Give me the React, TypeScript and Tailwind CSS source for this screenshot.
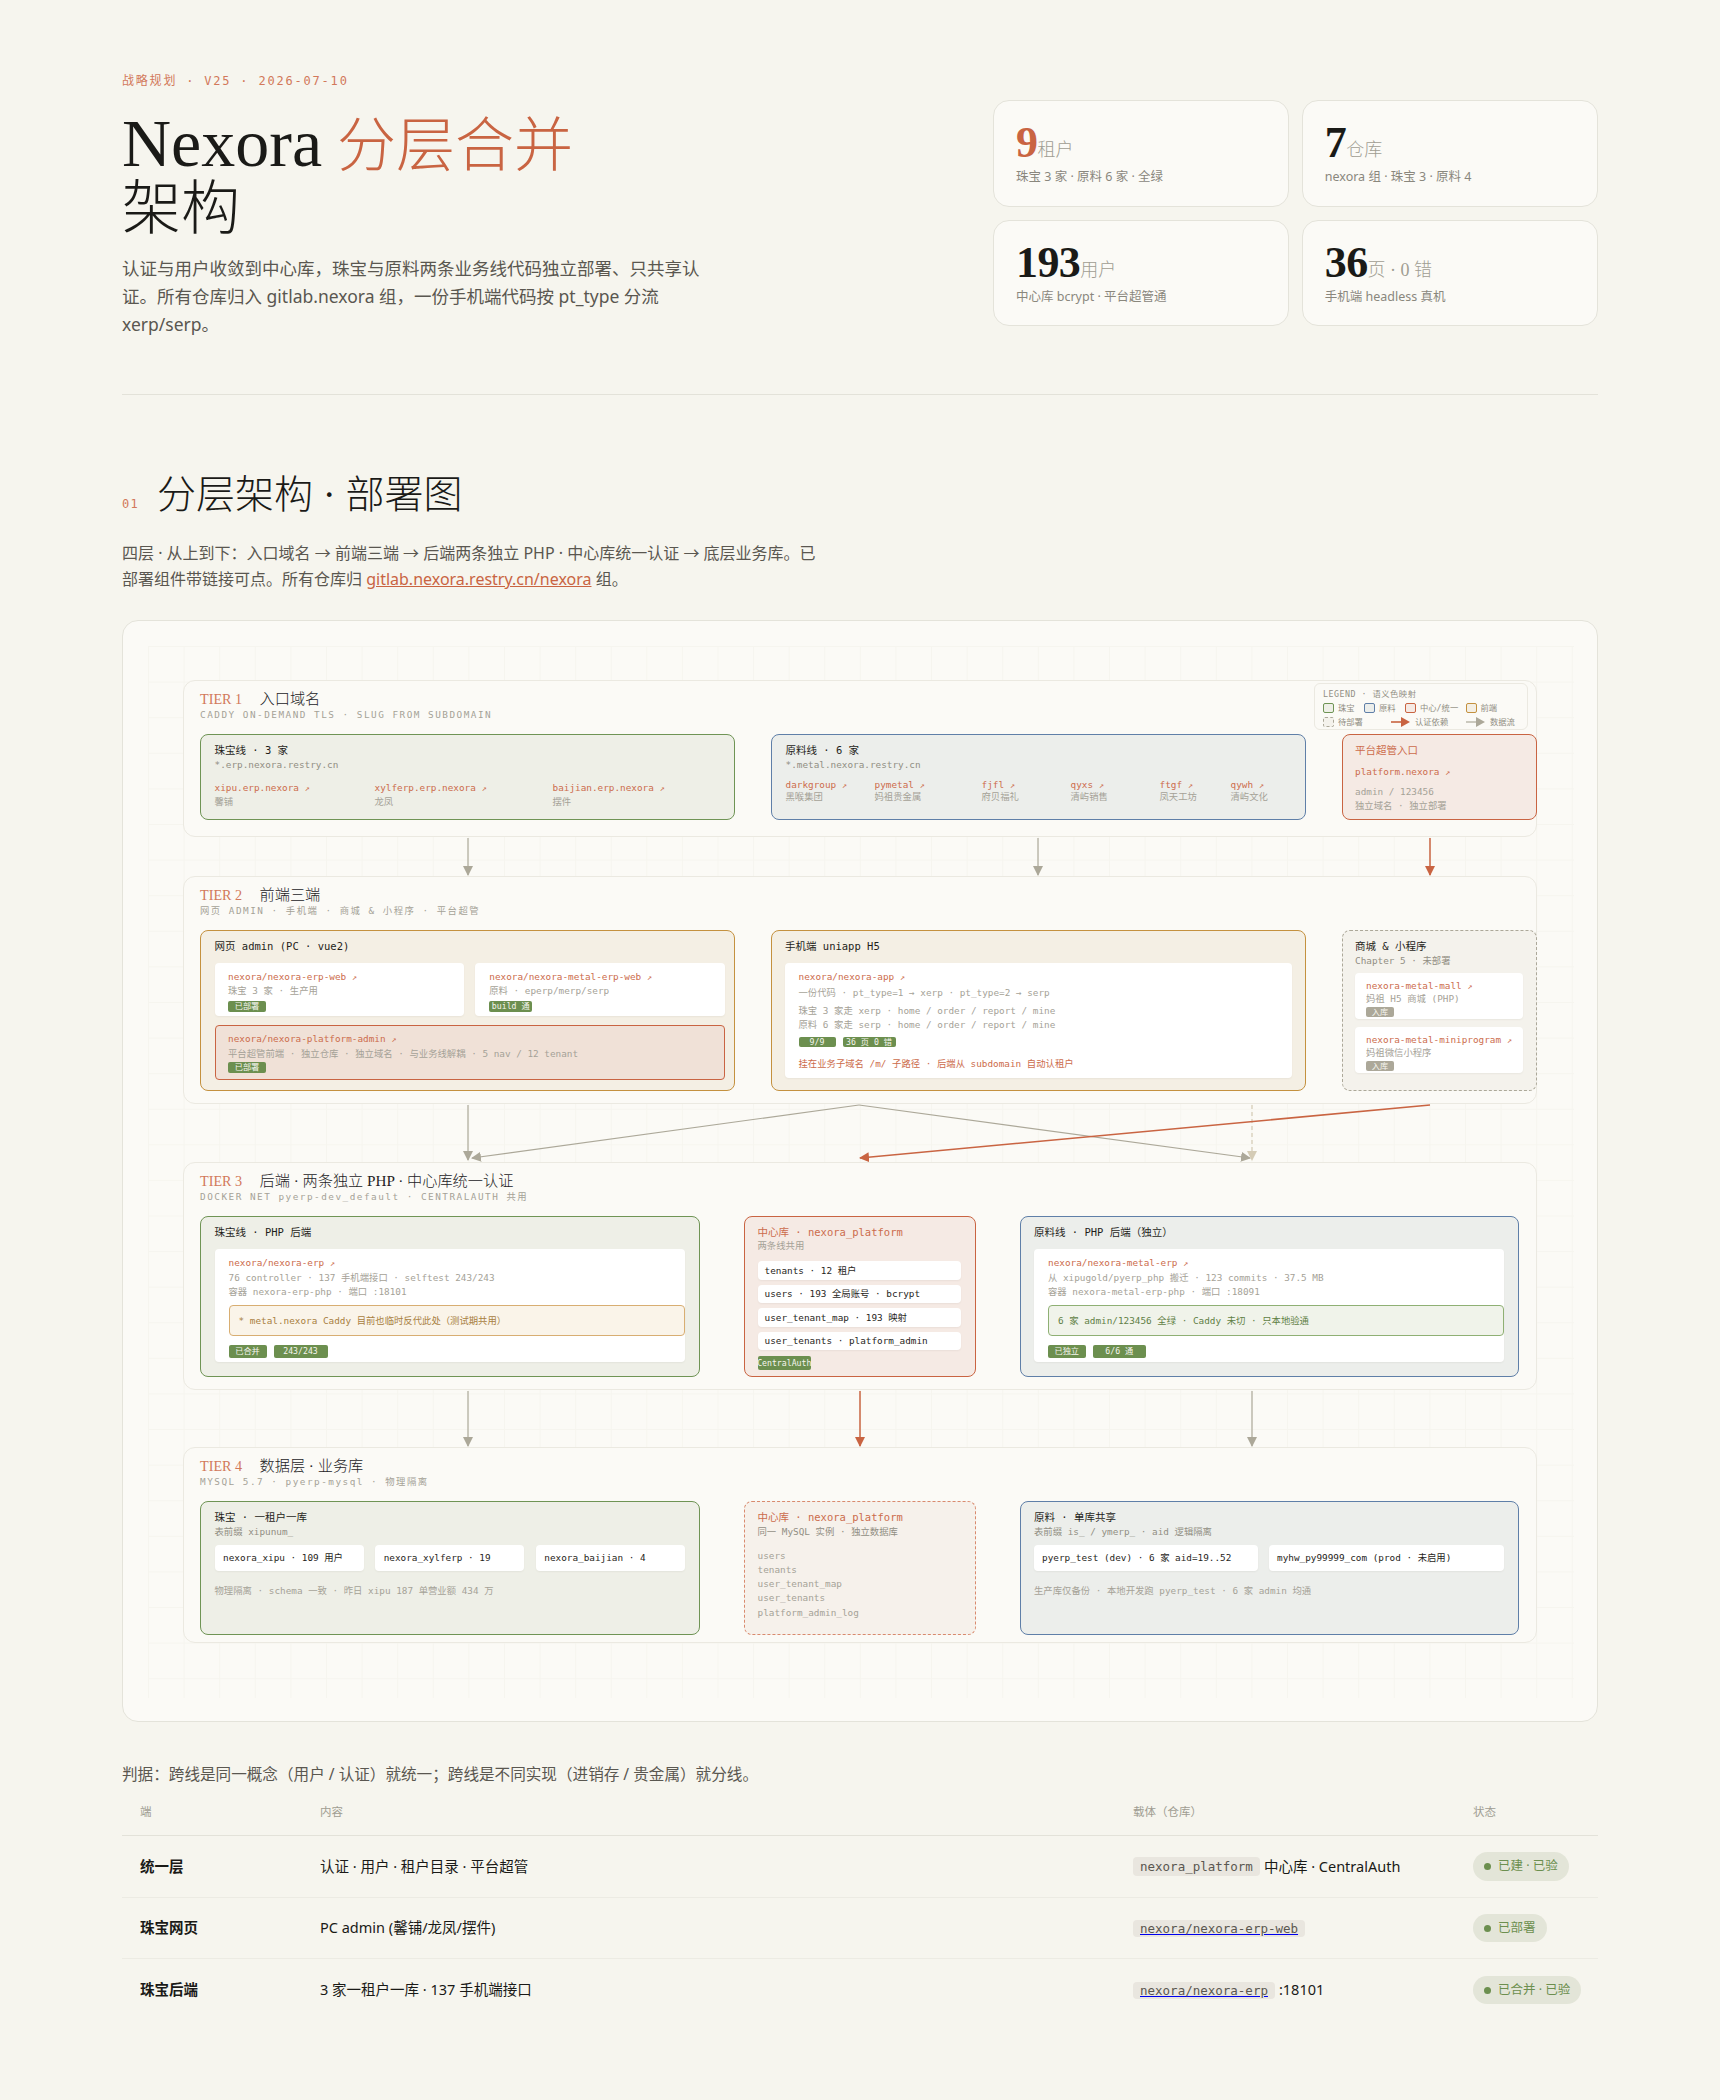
import React from 'react'

const MONO = "font-['DejaVu_Sans_Mono','Noto_Sans_CJK_SC',monospace]"
const SERIF = "font-['Liberation_Serif','Noto_Sans_CJK_SC',serif]"
const LINE = 'h-[14px] leading-[14px] whitespace-pre'
const BOX = 'rounded-[8px] border-[1.5px] pt-[8px]'
const GREEN = 'border-[#6f9455] bg-[#eeefe7]'
const BLUE = 'border-[#5f7fa8] bg-[#eceeeb]'
const AMBER = 'border-[#c4913f] bg-[#f4efe4]'
const RED = 'border-[#c96442] bg-[#f5eae4]'
const CARD = 'rounded-[4px] bg-white shadow-[0_1px_2px_rgba(60,50,30,0.06)]'

function Tier({ n, title, sub, className, children }: { n: number; title: string; sub: string; className?: string; children: React.ReactNode }) {
  return (
    <div className={`relative rounded-[12px] border border-[#ebe9e1] bg-[#fbfaf6] pl-[16px] pt-[9px] ${className || ''}`}>
      <div className="flex h-[18px] items-center leading-[18px]">
        <span className={`${SERIF} w-[59.5px] text-[14.2px] text-[#d2785a]`}>TIER {n}</span>
        <span className={`${SERIF} text-[15.2px] font-light text-[#24231f]`}>{title}</span>
      </div>
      <div className={`${MONO} ${LINE} text-[9.35px] tracking-[1.5px] text-[#a5a297]`}>{sub}</div>
      {children}
    </div>
  )
}

function Title({ children, coral }: { children: React.ReactNode; coral?: boolean }) {
  return <div className={`${LINE} text-[10.5px] ${coral ? 'text-[#cc6c4c]' : 'text-[#1f1e1a]'}`}>{children}</div>
}

function Sub({ children, className }: { children: React.ReactNode; className?: string }) {
  return <div className={`${LINE} text-[9.35px] text-[#918e83] ${className || ''}`}>{children}</div>
}

function Link({ children, className }: { children: React.ReactNode; className?: string }) {
  return (
    <div className={`${LINE} text-[9.35px] text-[#cc6c4c] ${className || ''}`}>
      {children} <span className="text-[8.5px]">↗</span>
    </div>
  )
}

function Badge({ children, w, h, gray, className }: { children: React.ReactNode; w: string; h: string; gray?: boolean; className?: string }) {
  return (
    <div className={`flex items-center justify-center overflow-hidden rounded-[2px] text-[8.2px] leading-none text-[#f6f5ee] ${gray ? 'bg-[#aca899]' : 'bg-[#6c8f4f]'} ${w} ${h} ${className || ''}`}>
      {children}
    </div>
  )
}

function Legend() {
  return (
    <div className={`${MONO} absolute right-[8px] top-[2px] h-[47px] w-[214px] rounded-[6px] border border-[#ebe9e1] bg-[#fbfaf6] pl-[8px] pt-[4px] text-[8.3px] leading-[12px] text-[#918e83]`}>
      <div className="h-[12px] whitespace-pre tracking-[0.5px]">LEGEND · 语义色映射</div>
      <div className="mt-[2px] flex h-[12px] items-center whitespace-pre">
        <span className="h-[10px] w-[11px] rounded-[2px] border border-[#6f9455] bg-[#eeefe7]" />
        <span className="ml-[4px] w-[26px]">珠宝</span>
        <span className="h-[10px] w-[11px] rounded-[2px] border border-[#5f7fa8] bg-[#eceeeb]" />
        <span className="ml-[4px] w-[26px]">原料</span>
        <span className="h-[10px] w-[11px] rounded-[2px] border border-[#c96442] bg-[#f5eae4]" />
        <span className="ml-[4px] w-[45.5px]">中心/统一</span>
        <span className="h-[10px] w-[11px] rounded-[2px] border border-[#c4913f] bg-[#f4efe4]" />
        <span className="ml-[4px]">前端</span>
      </div>
      <div className="mt-[2px] flex h-[12px] items-center whitespace-pre">
        <span className="h-[10px] w-[11px] rounded-[2px] border border-dashed border-[#aca899] bg-[#f4f2ec]" />
        <span className="ml-[4px] w-[53px]">待部署</span>
        <svg width="19" height="10" viewBox="0 0 19 10"><path d="M0 5h11" stroke="#c96442" strokeWidth="1.6" /><path d="M10 0l9 5-9 5z" fill="#c96442" /></svg>
        <span className="ml-[5px] w-[51px]">认证依赖</span>
        <svg width="19" height="10" viewBox="0 0 19 10"><path d="M0 5h11" stroke="#aca899" strokeWidth="1.2" /><path d="M10 0l9 5-9 5z" fill="#aca899" /></svg>
        <span className="ml-[5px]">数据流</span>
      </div>
    </div>
  )
}

function Arrows() {
  return (
    <svg className="absolute left-[-1px] top-[-1px]" width="1476" height="1101" viewBox="122 620 1476 1101" fill="none">
      <defs>
        <marker id="g" markerWidth="10" markerHeight="10" refX="9" refY="5" orient="auto" markerUnits="userSpaceOnUse">
          <path d="M0 0L10 5L0 10z" fill="#aca899" />
        </marker>
        <marker id="r" markerWidth="10" markerHeight="10" refX="9" refY="5" orient="auto" markerUnits="userSpaceOnUse">
          <path d="M0 0L10 5L0 10z" fill="#c96442" />
        </marker>
        <marker id="d" markerWidth="10" markerHeight="10" refX="9" refY="5" orient="auto" markerUnits="userSpaceOnUse">
          <path d="M0 0L10 5L0 10z" fill="#d4cbb5" />
        </marker>
      </defs>
      <g stroke="#aca899" strokeWidth="1.2">
        <path d="M468 838V875" markerEnd="url(#g)" />
        <path d="M1038 838V875" markerEnd="url(#g)" />
        <path d="M468 1105V1160" markerEnd="url(#g)" />
        <path d="M859 1105L472 1158" markerEnd="url(#g)" />
        <path d="M859 1105L1250 1158" markerEnd="url(#g)" />
        <path d="M468 1391V1446" markerEnd="url(#g)" />
        <path d="M1252 1391V1446" markerEnd="url(#g)" />
      </g>
      <path d="M1252 1105V1160" stroke="#d4cbb5" strokeWidth="1.2" strokeDasharray="4 3" markerEnd="url(#d)" />
      <g stroke="#c96442" strokeWidth="1.5">
        <path d="M1430 838V875" markerEnd="url(#r)" />
        <path d="M1430 1105L860 1158" markerEnd="url(#r)" />
        <path d="M860 1391V1446" markerEnd="url(#r)" />
      </g>
    </svg>
  )
}

function Diagram() {
  return (
    <div className="relative mt-[28px] h-[1102px] rounded-[16px] border border-[#e4e3da] bg-[#fbfaf6] px-[60px] pt-[59px]">
      <div className="absolute left-[25px] top-[25px] h-[1052px] w-[1426px] bg-[linear-gradient(#f6f5ef_1px,transparent_1px),linear-gradient(90deg,#f6f5ef_1px,transparent_1px)] bg-[size:35.6px_35.6px]" />
      <Arrows />
      <div className={`${MONO} relative`}>
        <Tier n={1} title="入口域名" sub="CADDY ON-DEMAND TLS · SLUG FROM SUBDOMAIN" className="h-[157px]">
          <Legend />
          <div className="mt-[12px] grid grid-cols-[535px_535px_195px] gap-[36px]">
            <div className={`${BOX} ${GREEN} h-[86px] pl-[13.5px]`}>
              <Title>珠宝线 · 3 家</Title>
              <Sub className="mt-[1px]">*.erp.nexora.restry.cn</Sub>
              <div className="mt-[9px] grid grid-cols-[160px_178px_1fr]">
                <div><Link>xipu.erp.nexora</Link><Sub className="text-[#a5a297]">馨铺</Sub></div>
                <div><Link>xylferp.erp.nexora</Link><Sub className="text-[#a5a297]">龙凤</Sub></div>
                <div><Link>baijian.erp.nexora</Link><Sub className="text-[#a5a297]">摆件</Sub></div>
              </div>
            </div>
            <div className={`${BOX} ${BLUE} h-[86px] pl-[13.5px]`}>
              <Title>原料线 · 6 家</Title>
              <Sub className="mt-[1px]">*.metal.nexora.restry.cn</Sub>
              <div className="mt-[6px] grid grid-cols-[89px_107px_89px_89px_71px_1fr]">
                {[['darkgroup', '黑喉集团'], ['pymetal', '妈祖贵金属'], ['fjfl', '府贝福礼'], ['qyxs', '清屿销售'], ['ftgf', '凤天工坊'], ['qywh', '清屿文化']].map(([a, b]) => (
                  <div key={a}><Link className="!h-[13px] !leading-[13px]">{a}</Link><Sub className="!h-[12px] !leading-[12px] text-[#a5a297]">{b}</Sub></div>
                ))}
              </div>
            </div>
            <div className={`${BOX} ${RED} h-[86px] pl-[12px]`}>
              <Title coral>平台超管入口</Title>
              <Link className="mt-[8px]">platform.nexora</Link>
              <Sub className="mt-[6px] text-[#a5a297]">admin / 123456</Sub>
              <Sub className="text-[#a5a297]">独立域名 · 独立部署</Sub>
            </div>
          </div>
        </Tier>

        <Tier n={2} title="前端三端" sub="网页 ADMIN · 手机端 · 商城 & 小程序 · 平台超管" className="mt-[39px] h-[228px]">
          <div className="mt-[12px] grid grid-cols-[535px_535px_195px] gap-[36px]">
            <div className={`${BOX} ${AMBER} h-[161px] pl-[13.5px] pr-[9.5px]`}>
              <Title>网页 admin (PC · vue2)</Title>
              <div className="mt-[10px] grid grid-cols-2 gap-[11.5px]">
                <div className={`${CARD} h-[52.5px] pl-[13.5px] pt-[7px]`}>
                  <Link>nexora/nexora-erp-web</Link>
                  <Sub className="text-[#a5a297]">珠宝 3 家 · 生产用</Sub>
                  <Badge w="w-[38px]" h="h-[11px]" className="mt-[2.5px]">已部署</Badge>
                </div>
                <div className={`${CARD} h-[52.5px] pl-[14px] pt-[7px]`}>
                  <Link>nexora/nexora-metal-erp-web</Link>
                  <Sub className="text-[#a5a297]">原料 · eperp/merp/serp</Sub>
                  <Badge w="w-[43px]" h="h-[11px]" className="mt-[2.5px]">build 通</Badge>
                </div>
              </div>
              <div className="mt-[9px] h-[55px] rounded-[4px] border-[1.5px] border-[#c96442] bg-[#f0e1d7] pl-[12.5px] pt-[6px]">
                <Link>nexora/nexora-platform-admin</Link>
                <Sub className="mt-[1px] text-[#a5a297]">平台超管前端 · 独立仓库 · 独立域名 · 与业务线解耦 · 5 nav / 12 tenant</Sub>
                <Badge w="w-[38px]" h="h-[11px]" className="mt-[1px]">已部署</Badge>
              </div>
            </div>
            <div className={`${BOX} ${AMBER} h-[161px] pl-[13px] pr-[13.5px]`}>
              <Title>手机端 uniapp H5</Title>
              <div className={`${CARD} mt-[10px] h-[115px] pl-[13.5px] pt-[7px]`}>
                <Link>nexora/nexora-app</Link>
                <Sub className="mt-[2px] text-[#a5a297]">一份代码 · pt_type=1 → xerp · pt_type=2 → serp</Sub>
                <Sub className="mt-[4px] text-[#a5a297]">珠宝 3 家走 xerp · home / order / report / mine</Sub>
                <Sub className="text-[#a5a297]">原料 6 家走 serp · home / order / report / mine</Sub>
                <div className="mt-[5px] flex gap-[7px]">
                  <Badge w="w-[37px]" h="h-[10px]">9/9</Badge>
                  <Badge w="w-[53px]" h="h-[10px]">36 页 0 错</Badge>
                </div>
                <Sub className="mt-[10px] !text-[#cc6c4c]">挂在业务子域名 /m/ 子路径 · 后端从 subdomain 自动认租户</Sub>
              </div>
            </div>
            <div className="h-[161px] rounded-[8px] border-[1.5px] border-dashed border-[#aca899] bg-[#f4f2ec] pl-[12px] pr-[13px] pt-[8px]">
              <Title>商城 &amp; 小程序</Title>
              <Sub className="mt-[1px] text-[#6f6c62]">Chapter 5 · 未部署</Sub>
              <div className={`${CARD} mt-[5px] h-[46px] pl-[11px] pt-[6px]`}>
                <Link>nexora-metal-mall</Link>
                <Sub className="!h-[12px] !leading-[12px] text-[#a5a297]">妈祖 H5 商城 (PHP)</Sub>
                <Badge gray w="w-[28px]" h="h-[10px]" className="mt-[2px]">入库</Badge>
              </div>
              <div className={`${CARD} mt-[8px] h-[46px] pl-[11px] pt-[6px]`}>
                <Link>nexora-metal-miniprogram</Link>
                <Sub className="!h-[12px] !leading-[12px] text-[#a5a297]">妈祖微信小程序</Sub>
                <Badge gray w="w-[28px]" h="h-[10px]" className="mt-[2px]">入库</Badge>
              </div>
            </div>
          </div>
        </Tier>

        <Tier n={3} title="后端 · 两条独立 PHP · 中心库统一认证" sub="DOCKER NET pyerp-dev_default · CENTRALAUTH 共用" className="mt-[58px] h-[228px]">
          <div className="mt-[12px] grid grid-cols-[499.5px_232px_499px] gap-[44px]">
            <div className={`${BOX} ${GREEN} h-[161px] pl-[13.5px] pr-[13.5px]`}>
              <Title>珠宝线 · PHP 后端</Title>
              <div className={`${CARD} mt-[10px] h-[113px] pl-[14px] pt-[7px]`}>
                <Link>nexora/nexora-erp</Link>
                <Sub className="mt-[1px] text-[#a5a297]">76 controller · 137 手机端接口 · selftest 243/243</Sub>
                <Sub className="text-[#a5a297]">容器 nexora-erp-php · 端口 :18101</Sub>
                <div className="mt-[6px] flex h-[31px] items-center rounded-[4px] border border-[#d8ae72] bg-[#faf4e9] pl-[9px] text-[9.35px] text-[#a8803f] whitespace-pre">* metal.nexora Caddy 目前也临时反代此处（测试期共用）</div>
                <div className="mt-[8.5px] flex gap-[7px]">
                  <Badge w="w-[38px]" h="h-[13px]">已合并</Badge>
                  <Badge w="w-[54px]" h="h-[13px]">243/243</Badge>
                </div>
              </div>
            </div>
            <div className={`${BOX} ${RED} h-[161px] pl-[13px] pr-[13.5px]`}>
              <Title coral>中心库 · nexora_platform</Title>
              <Sub className="text-[#a5a297]">两条线共用</Sub>
              <div className="mt-[8px] flex flex-col gap-[5px]">
                {['tenants · 12 租户', 'users · 193 全局账号 · bcrypt', 'user_tenant_map · 193 映射', 'user_tenants · platform_admin'].map(t => (
                  <div key={t} className={`${CARD} flex h-[18.5px] items-center pl-[7px] text-[9.35px] text-[#1f1e1a] whitespace-pre`}>{t}</div>
                ))}
              </div>
              <Badge w="w-[53.5px]" h="h-[14px]" className="mt-[5.5px]">CentralAuth</Badge>
            </div>
            <div className={`${BOX} ${BLUE} h-[161px] pl-[13.5px] pr-[13.5px]`}>
              <Title>原料线 · PHP 后端（独立）</Title>
              <div className={`${CARD} mt-[10px] h-[113px] pl-[14px] pt-[7px]`}>
                <Link>nexora/nexora-metal-erp</Link>
                <Sub className="mt-[1px] text-[#a5a297]">从 xipugold/pyerp_php 搬迁 · 123 commits · 37.5 MB</Sub>
                <Sub className="text-[#a5a297]">容器 nexora-metal-erp-php · 端口 :18091</Sub>
                <div className="mt-[6px] flex h-[31px] items-center rounded-[4px] border border-[#8fb074] bg-[#f0f3ea] pl-[9px] text-[9.35px] text-[#5f7f45] whitespace-pre">6 家 admin/123456 全绿 · Caddy 未切 · 只本地验通</div>
                <div className="mt-[8.5px] flex gap-[7px]">
                  <Badge w="w-[37.5px]" h="h-[13px]">已独立</Badge>
                  <Badge w="w-[53.5px]" h="h-[13px]">6/6 通</Badge>
                </div>
              </div>
            </div>
          </div>
        </Tier>

        <Tier n={4} title="数据层 · 业务库" sub="MYSQL 5.7 · pyerp-mysql · 物理隔离" className="mt-[57px] h-[196px]">
          <div className="mt-[12px] grid grid-cols-[499.5px_232px_499px] gap-[44px]">
            <div className={`${BOX} ${GREEN} h-[134px] pl-[13.5px] pr-[13.5px]`}>
              <Title>珠宝 · 一租户一库</Title>
              <Sub className="mt-[1px] text-[#6f6c62]">表前缀 xipunum_</Sub>
              <div className="mt-[6px] grid grid-cols-3 gap-[11.5px]">
                {['nexora_xipu · 109 用户', 'nexora_xylferp · 19', 'nexora_baijian · 4'].map(t => (
                  <div key={t} className={`${CARD} flex h-[26px] items-center pl-[8.5px] text-[9.35px] text-[#1f1e1a] whitespace-pre`}>{t}</div>
                ))}
              </div>
              <Sub className="mt-[13px] text-[#a5a297]">物理隔离 · schema 一致 · 昨日 xipu 187 单营业额 434 万</Sub>
            </div>
            <div className={`${BOX} h-[134px] border-dashed border-[#d98a6e] bg-[#f6f1eb] pl-[13px]`}>
              <Title coral>中心库 · nexora_platform</Title>
              <Sub className="mt-[1px] text-[#918e83]">同一 MySQL 实例 · 独立数据库</Sub>
              <Sub className="mt-[10px] text-[#a5a297]">users</Sub>
              <Sub className="text-[#a5a297]">tenants</Sub>
              <Sub className="text-[#a5a297]">user_tenant_map</Sub>
              <Sub className="text-[#a5a297]">user_tenants</Sub>
              <Sub className="mt-[1px] text-[#a5a297]">platform_admin_log</Sub>
            </div>
            <div className={`${BOX} ${BLUE} h-[134px] pl-[13.5px] pr-[13.5px]`}>
              <Title>原料 · 单库共享</Title>
              <Sub className="mt-[1px] text-[#6f6c62]">表前缀 is_ / ymerp_ · aid 逻辑隔离</Sub>
              <div className="mt-[6px] grid grid-cols-[224px_1fr] gap-[11px]">
                {['pyerp_test (dev) · 6 家 aid=19..52', 'myhw_py99999_com (prod · 未启用)'].map(t => (
                  <div key={t} className={`${CARD} flex h-[26px] items-center pl-[8px] text-[9.35px] text-[#1f1e1a] whitespace-pre`}>{t}</div>
                ))}
              </div>
              <Sub className="mt-[13px] text-[#a5a297]">生产库仅备份 · 本地开发跑 pyerp_test · 6 家 admin 均通</Sub>
            </div>
          </div>
        </Tier>
      </div>
    </div>
  )
}

function Stat({ n, unit, sub, coral }: { n: string; unit: string; sub: string; coral?: boolean }) {
  return (
    <div className="h-[106.5px] rounded-[16px] border border-[#e4e3da] bg-[#fbfaf6] pl-[22px] pt-[20px]">
      <div className="flex h-[44px] items-end leading-[44px]">
        <span className={`${SERIF} text-[44px] font-bold tracking-[-0.6px] ${coral ? 'text-[#c96442]' : 'text-[#1a1a17]'}`}>{n}</span>
        <span className={`${SERIF} text-[18px] font-light leading-[29px] text-[#a09d92]`}>{unit}</span>
      </div>
      <div className="mt-[3px] text-[12.5px] leading-[18px] text-[#8a877d]">{sub}</div>
    </div>
  )
}

const Dot = () => <span className="mr-[7px] h-[7px] w-[7px] rounded-full bg-[#6c8f4f]" />

function Row({ name, desc, repo, after, href, status, last }: { name: string; desc: string; repo: string; after: string; href?: boolean; status: string; last?: boolean }) {
  const code = <code className={`${MONO} rounded-[4px] bg-[#e9e6df] px-[7px] py-[1px] text-[12.5px] leading-[17px] text-[#5a5750]`}>{repo}</code>
  return (
    <div className={`grid h-[61.5px] grid-cols-[198px_813px_340px_1fr] items-center text-[14.5px] text-[#1a1a17] ${last ? '' : 'border-b border-[#ecebe3]'}`}>
      <div className="pl-[18px] font-semibold">{name}</div>
      <div>{desc}</div>
      <div className="flex items-center">
        {href ? <a href="#" className="text-[#0000ee] underline">{code}</a> : code}
        <span className="ml-[4px]">{after}</span>
      </div>
      <div>
        <span className="inline-flex h-[28.5px] items-center rounded-full bg-[#e3e5d8] px-[11px] text-[12.5px] text-[#6c8f4f]"><Dot />{status}</span>
      </div>
    </div>
  )
}

export default function App() {
  return (
    <div className="min-h-[2100px] bg-[#f6f5ee] px-[122px] pt-[73px] font-['Noto_Sans','Noto_Sans_CJK_SC',sans-serif] text-[#1a1a17]">
      <div className="flex justify-between">
        <div className="w-[600px]">
          <div className={`${MONO} h-[16px] text-[12px] leading-[16px] tracking-[1.8px] text-[#d2785a]`}>战略规划 · V25 · 2026-07-10</div>
          <h1 className={`${SERIF} mt-[20px] h-[128.5px] w-[480px] text-[59px] font-light leading-[63px]`}>
            <span className="text-[68px] leading-none">Nexora</span> <span className="text-[#c96442]">分层合并</span> 架构
          </h1>
          <p className="mt-[16.5px] w-[590px] text-[17.5px] leading-[28px] text-[#5a5750]">认证与用户收敛到中心库，珠宝与原料两条业务线代码独立部署、只共享认证。所有仓库归入 gitlab.nexora 组，一份手机端代码按 pt_type 分流 xerp/serp。</p>
        </div>
        <div className="mt-[27px] grid w-[605px] grid-cols-2 content-start gap-x-[12.5px] gap-y-[13px]">
          <Stat coral n="9" unit="租户" sub="珠宝 3 家 · 原料 6 家 · 全绿" />
          <Stat n="7" unit="仓库" sub="nexora 组 · 珠宝 3 · 原料 4" />
          <Stat n="193" unit="用户" sub="中心库 bcrypt · 平台超管通" />
          <Stat n="36" unit="页 · 0 错" sub="手机端 headless 真机" />
        </div>
      </div>

      <div className="mt-[56px] border-t border-[#e3e2d9]" />

      <div className="mt-[75px] flex h-[50px] items-end">
        <span className={`${MONO} mb-[8px] w-[35px] text-[12px] leading-[16px] tracking-[1.2px] text-[#d2785a]`}>01</span>
        <h2 className={`${SERIF} text-[39px] font-light leading-[50px]`}>分层架构 · 部署图</h2>
      </div>
      <p className="mt-[19.5px] w-[700px] text-[16px] leading-[26.4px] text-[#5a5750]">四层 · 从上到下：入口域名 → 前端三端 → 后端两条独立 PHP · 中心库统一认证 → 底层业务库。已部署组件带链接可点。所有仓库归 <a href="#" className="text-[#c96442] underline">gitlab.nexora.restry.cn/nexora</a> 组。</p>

      <Diagram />

      <p className="mt-[39px] text-[15.6px] leading-[26px] text-[#5a5750]">判据：跨线是同一概念（用户 / 认证）就统一；跨线是不同实现（进销存 / 贵金属）就分线。</p>

      <div className="grid h-[49px] grid-cols-[198px_813px_340px_1fr] items-center border-b border-[#e3e2d9] text-[11.5px] text-[#a09d92]">
        <div className="pl-[18px]">端</div>
        <div>内容</div>
        <div>载体（仓库）</div>
        <div>状态</div>
      </div>
      <Row name="统一层" desc="认证 · 用户 · 租户目录 · 平台超管" repo="nexora_platform" after="中心库 · CentralAuth" status="已建 · 已验" />
      <Row name="珠宝网页" desc="PC admin (馨铺/龙凤/摆件)" repo="nexora/nexora-erp-web" after="" href status="已部署" />
      <Row name="珠宝后端" desc="3 家一租户一库 · 137 手机端接口" repo="nexora/nexora-erp" after=":18101" href status="已合并 · 已验" last />
    </div>
  )
}
